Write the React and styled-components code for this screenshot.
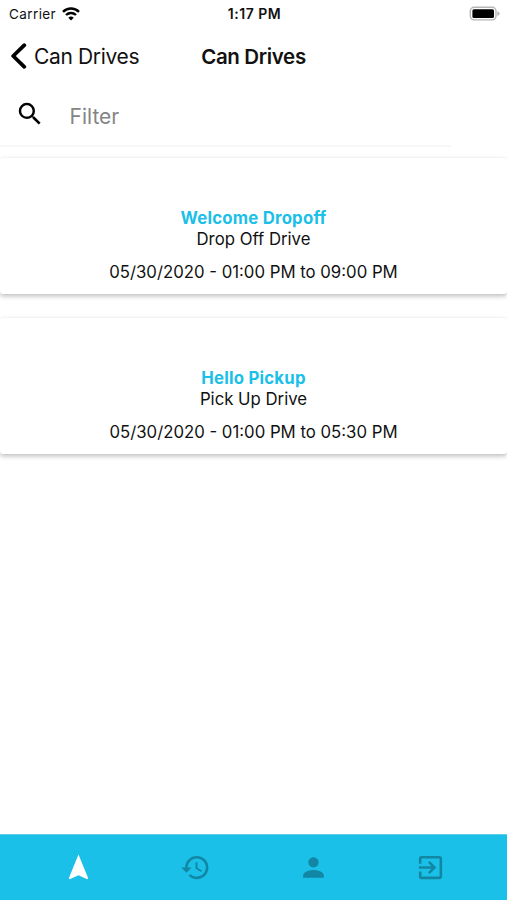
import React from "react";
import styled, { createGlobalStyle } from "styled-components";
import {
  MdExitToApp,
  MdHistory,
  MdNavigation,
  MdPerson,
  MdSearch,
} from "react-icons/md";

const GlobalStyle = createGlobalStyle`
  * {
    box-sizing: border-box;
  }
  body {
    margin: 0;
    background-color: #ffffff;
    color: #111111;
    font-family: Inter, "Liberation Sans", sans-serif;
  }
`;

const Screen = styled.div`
  display: flex;
  flex-direction: column;
  height: 100vh;
  overflow: hidden;
`;

const StatusBar = styled.div`
  display: grid;
  grid-template-columns: 1fr auto 1fr;
  align-items: center;
  height: 27px;
  padding: 0 7px 0 9px;
  font-size: 13.5px;
`;

const Carrier = styled.div`
  display: flex;
  align-items: center;
  gap: 6px;
  letter-spacing: 0.4px;
`;

const Clock = styled.div`
  font-size: 14px;
  font-weight: 600;
  letter-spacing: 0.5px;
`;

const Battery = styled.svg`
  justify-self: end;
`;

const Header = styled.header`
  display: grid;
  grid-template-columns: 1fr auto 1fr;
  align-items: center;
  height: 58px;
  padding: 0 10px;
`;

const BackButton = styled.button`
  display: flex;
  align-items: center;
  gap: 7px;
  padding: 0;
  border: none;
  background: none;
  color: inherit;
  font: inherit;
  font-size: 21px;
  letter-spacing: -0.35px;
  white-space: nowrap;
`;

const Title = styled.h1`
  margin: 0;
  font-size: 20.5px;
  font-weight: 600;
  letter-spacing: -0.35px;
`;

const FilterRow = styled.div`
  display: flex;
  align-items: center;
  gap: 24.5px;
  width: 451px;
  height: 62px;
  padding: 0 15px;
  border-bottom: 2px solid #f7f7f7;
`;

const SearchIcon = styled(MdSearch)`
  flex-shrink: 0;
  margin-bottom: 2px;
  color: #000000;
`;

const FilterInput = styled.input`
  flex: 1;
  padding: 2px 0 0;
  border: none;
  outline: none;
  background: none;
  font: inherit;
  font-size: 21px;
  &::placeholder {
    color: #858585;
    opacity: 1;
  }
`;

const DriveList = styled.main`
  display: flex;
  flex: 1;
  flex-direction: column;
  gap: 24px;
  padding-top: 11px;
`;

const Card = styled.div`
  height: 136px;
  padding-top: 50px;
  border-radius: 3px;
  background-color: #ffffff;
  box-shadow: 0 2px 5px rgba(0, 0, 0, 0.27);
  font-size: 16.75px;
  line-height: 21px;
  text-align: center;
`;

const DriveName = styled.div`
  color: #1bc0e8;
  font-weight: 700;
  letter-spacing: 0.22px;
`;

const DriveTime = styled.div`
  margin-top: 12px;
`;

const TabBar = styled.nav`
  display: flex;
  height: 66px;
  padding: 0 18px 0 20px;
  border-top: 1px solid #5fcdec;
  background-color: #1bc0e8;
`;

const Tab = styled.button`
  display: flex;
  flex: 1;
  align-items: center;
  justify-content: center;
  padding: 0;
  border: none;
  background: none;
  color: ${(props) => (props.$active ? "#ffffff" : "#1287a4")};
`;

const drives = [
  {
    name: "Welcome Dropoff",
    type: "Drop Off Drive",
    time: "05/30/2020 - 01:00 PM to 09:00 PM",
  },
  {
    name: "Hello Pickup",
    type: "Pick Up Drive",
    time: "05/30/2020 - 01:00 PM to 05:30 PM",
  },
];

const tabs = [
  { label: "Drives", Icon: MdNavigation },
  { label: "History", Icon: MdHistory },
  { label: "Profile", Icon: MdPerson },
  { label: "Log out", Icon: MdExitToApp },
];

const WifiIcon = () => (
  <svg width="18" height="14" viewBox="0 0 18 14" fill="none">
    <path d="M1 4.8a11.5 11.5 0 0 1 16 0" stroke="#000" strokeWidth="2.5" />
    <path d="M4 8a7.2 7.2 0 0 1 10 0" stroke="#000" strokeWidth="2.3" />
    <path d="M6.3 10.7a4 4 0 0 1 5.4 0L9 13.5z" fill="#000" />
  </svg>
);

const App = () => {
  const [activeTab, setActiveTab] = React.useState(0);
  const [filter, setFilter] = React.useState("");

  const visibleDrives = drives.filter((drive) =>
    drive.name.toLowerCase().includes(filter.toLowerCase())
  );

  return (
    <Screen>
      <GlobalStyle />
      <StatusBar>
        <Carrier>
          Carrier
          <WifiIcon />
        </Carrier>
        <Clock>1:17 PM</Clock>
        <Battery width="31" height="16" viewBox="0 0 31 16">
          <rect
            x="1.3"
            y="1.3"
            width="25.7"
            height="12.6"
            rx="3.8"
            fill="#fff"
            stroke="#b5b5b5"
            strokeWidth="1.4"
          />
          <rect x="3.4" y="3.3" width="21.6" height="8.8" rx="1.5" />
          <path d="M28.4 5.3q2.3.7 2.3 2.3t-2.3 2.3z" fill="#b5b5b5" />
        </Battery>
      </StatusBar>

      <Header>
        <BackButton>
          <svg width="17" height="26" viewBox="0 0 17 26" fill="none">
            <path
              d="M14.3 2.2L3.2 13L14.3 23.8"
              stroke="#000"
              strokeWidth="3.8"
              strokeLinecap="round"
              strokeLinejoin="round"
            />
          </svg>
          Can Drives
        </BackButton>
        <Title>Can Drives</Title>
      </Header>

      <FilterRow>
        <SearchIcon size={30} />
        <FilterInput
          type="text"
          placeholder="Filter"
          value={filter}
          onChange={(e) => setFilter(e.target.value)}
        />
      </FilterRow>

      <DriveList>
        {visibleDrives.map((drive) => (
          <Card key={drive.name}>
            <DriveName>{drive.name}</DriveName>
            <div>{drive.type}</div>
            <DriveTime>{drive.time}</DriveTime>
          </Card>
        ))}
      </DriveList>

      <TabBar>
        {tabs.map(({ label, Icon }, index) => (
          <Tab
            key={label}
            aria-label={label}
            $active={index === activeTab}
            onClick={() => setActiveTab(index)}
          >
            <Icon size={31} />
          </Tab>
        ))}
      </TabBar>
    </Screen>
  );
};

export default App;
